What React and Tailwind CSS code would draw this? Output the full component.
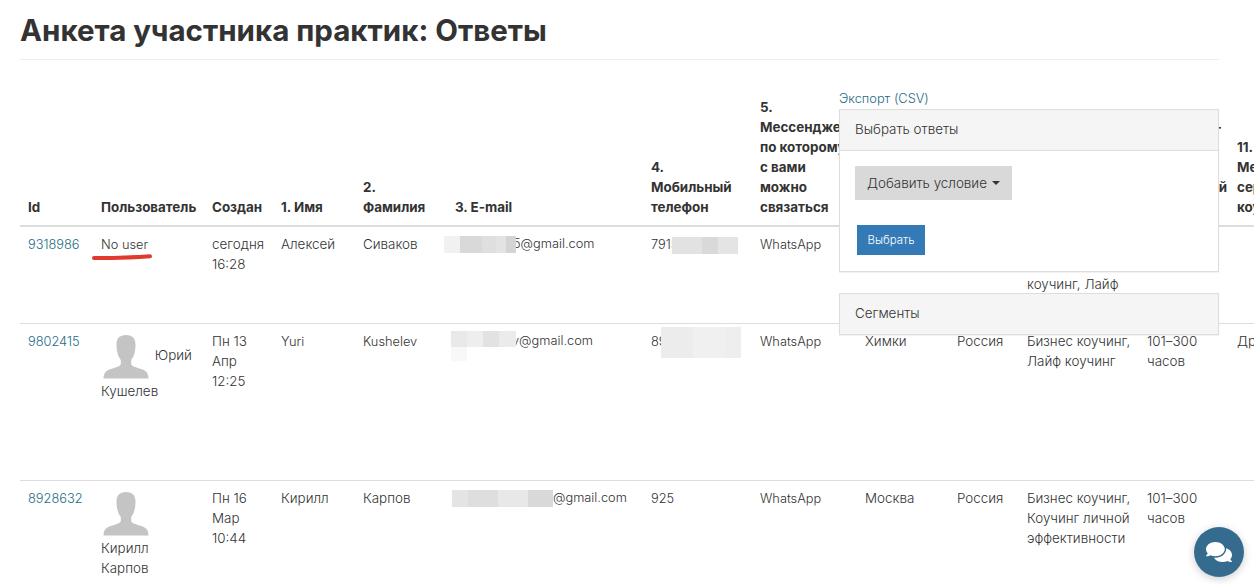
import React from 'react';
import { FaComments } from 'react-icons/fa';

const columns = [
  'w-[73px]', 'w-[111px]', 'w-[69px]', 'w-[82px]', 'w-[92px]', 'w-[196px]', 'w-[109px]',
  'w-[105px]', 'w-[92px]', 'w-[70px]', 'w-[120px]', 'w-[90px]', 'w-[200px]',
];

const headers = [
  ['Id'],
  ['Пользователь'],
  ['Создан'],
  ['1. Имя'],
  ['2.', 'Фамилия'],
  ['3. E-mail'],
  ['4.', 'Мобильный', 'телефон'],
  ['5.', 'Мессенджер,', 'по которому', 'с вами', 'можно', 'связаться'],
  ['6. Город'],
  ['7. Страна'],
  ['8. Направление', 'коучинга'],
  ['Ваш опыт -', 'часов', 'работы', 'тренерской', 'коучем'],
  ['11.', 'Место', 'сертификации', 'коуча'],
];

const Lines = ({ lines }) =>
  lines.map((line, i) => (
    <span key={i} className="block whitespace-nowrap">{line}</span>
  ));

// pixelated patches that cover personal data in the screenshot
const Patch = ({ className, parts }) => (
  <div className={`absolute flex ${className}`}>
    {parts.map((part, i) => (
      <div key={i} className={`h-full ${part}`}></div>
    ))}
  </div>
);

const Avatar = () => (
  <svg viewBox="0 0 50 50" className="inline-block w-[50px] h-[50px] align-middle">
    <path
      d="M25 4c-6.500 0-9.500 3.500-9.500 9.500 0 3 .4 7 1.400 10 .8 2.500 1.900 4 2.900 5.500v4c0 2.200-5.500 3.500-10 5-4.300 1.500-7 3-7.300 9.500h45c-.3-6.500-3-8-7.300-9.500-4.500-1.500-10-2.800-10-5v-4c1-1.500 2.100-3 2.900-5.500 1-3 1.400-7 1.400-10 0-6-3-9.500-9.500-9.500z"
      fill="#c4c4c4"
    />
  </svg>
);

const Td = ({ children, className = '' }) => (
  <td className={`relative p-2 align-top border-t border-[#ddd] ${className}`}>{children}</td>
);

const IdLink = ({ children }) => <a className="text-[12.8px] text-[#1f6b84]">{children}</a>;

const Latin = ({ children, className = '' }) => <span className={`text-[12.8px] ${className}`}>{children}</span>;

export default function App() {
  return (
    <div
      className="relative h-[584px] w-[1254px] overflow-hidden bg-white text-[13.4px] leading-5 text-[#333]"
      style={{ fontFamily: 'Inter, "Noto Sans", sans-serif' }}
    >
      <div className="pl-5 pr-[35px]">
        <h1 className="pt-[11px] pb-[10px] text-[29.500px] leading-[38px] font-bold border-b border-[#eee]">
          Анкета участника практик: Ответы
        </h1>
      </div>

      <table className="ml-5 mt-[29px] table-fixed border-collapse w-[1409px] font-light">
        <colgroup>
          {columns.map((c, i) => (
            <col key={i} className={c} />
          ))}
        </colgroup>
        <thead>
          <tr>
            {headers.map((h, i) => (
              <th key={i} className="p-2 text-left align-bottom font-bold border-b-2 border-[#ddd]">
                <Lines lines={h} />
              </th>
            ))}
          </tr>
        </thead>
        <tbody className="[&_td]:pt-[7px]">
          <tr className="h-[97px]">
            <Td><IdLink>9318986</IdLink></Td>
            <Td>
              <Latin>No user</Latin>
              <svg viewBox="0 0 60 6" className="absolute left-[-1px] top-[27px] w-[60px] h-[6px]">
                <path d="M2 4C20 4.300 40 3.500 58 2.300" stroke="#e0392e" strokeWidth="4" strokeLinecap="round" fill="none" />
              </svg>
            </Td>
            <Td><Lines lines={['сегодня', '16:28']} /></Td>
            <Td>Алексей</Td>
            <Td>Сиваков</Td>
            <Td>
              <Latin className="block pl-[58px]">5@gmail.com</Latin>
              <Patch
                className="left-[-3px] top-[9px] h-[17px]"
                parts={['w-[16px] bg-[#f1f1f1]', 'w-[22px] bg-[#d9d9d9]', 'w-[14px] bg-[#dfdfdf]', 'w-[10px] bg-[#e3e3e3]', 'w-[10px] bg-[#d4d4d4]']}
              />
            </Td>
            <Td>
              <Latin>7915</Latin>
              <Patch
                className="left-[29px] top-[10px] h-[17px]"
                parts={['w-[30px] bg-[#e2e2e2]', 'w-[16px] bg-[#d9d9d9]', 'w-[20px] bg-[#e4e4e4]']}
              />
            </Td>
            <Td><Latin>WhatsApp</Latin></Td>
            <Td></Td>
            <Td></Td>
            <Td><Lines lines={['Бизнес', 'и карьерный', 'коучинг, Лайф', 'коучинг']} /></Td>
            <Td></Td>
            <Td></Td>
          </tr>
          <tr className="h-[157px]">
            <Td><IdLink>9802415</IdLink></Td>
            <Td><Avatar /> Юрий Кушелев</Td>
            <Td>Пн 13 Апр 12:25</Td>
            <Td><Latin>Yuri</Latin></Td>
            <Td><Latin>Kushelev</Latin></Td>
            <Td>
              <Latin className="block pl-[57px]">v@gmail.com</Latin>
              <Patch
                className="left-[4px] top-[7px] h-[16px]"
                parts={['w-[16px] bg-[#e9e9e9]', 'w-[16px] bg-[#eeeeee]', 'w-[16px] bg-[#e2e2e2]', 'w-[17px] bg-[#ebebeb]']}
              />
              <Patch className="left-[4px] top-[23px] h-[14px]" parts={['w-[16px] bg-[#f8f8f8]']} />
            </Td>
            <Td>
              <Latin>89</Latin>
              <Patch
                className="left-[18px] top-[3px] h-[31px]"
                parts={['w-[32px] bg-[#ececec]', 'w-[32px] bg-[#f0f0f0]', 'w-[16px] bg-[#eeeeee]']}
              />
            </Td>
            <Td><Latin>WhatsApp</Latin></Td>
            <Td>Химки</Td>
            <Td>Россия</Td>
            <Td><Lines lines={['Бизнес коучинг,', 'Лайф коучинг']} /></Td>
            <Td><Lines lines={['101–300', 'часов']} /></Td>
            <Td>Другое</Td>
          </tr>
          <tr>
            <Td><IdLink>8928632</IdLink></Td>
            <Td><Avatar /> Кирилл Карпов</Td>
            <Td>Пн 16 Мар 10:44</Td>
            <Td>Кирилл</Td>
            <Td>Карпов</Td>
            <Td>
              <Latin className="block pl-[98px]">@gmail.com</Latin>
              <Patch
                className="left-[5px] top-[9px] h-[17px]"
                parts={['w-[16px] bg-[#e4e4e4]', 'w-[30px] bg-[#dedede]', 'w-[30px] bg-[#e8e8e8]', 'w-[25px] bg-[#d9d9d9]']}
              />
            </Td>
            <Td><Latin>925</Latin></Td>
            <Td><Latin>WhatsApp</Latin></Td>
            <Td>Москва</Td>
            <Td>Россия</Td>
            <Td><Lines lines={['Бизнес коучинг,', 'Коучинг личной', 'эффективности']} /></Td>
            <Td><Lines lines={['101–300', 'часов']} /></Td>
            <Td></Td>
          </tr>
        </tbody>
      </table>

      {/* filter panels sit over the table */}
      <div className="absolute left-[839px] top-[89px] w-[380px] font-light">
        <a className="block h-[20px] text-[12.8px] text-[#1f6b84]">Экспорт (CSV)</a>
        <div className="border border-[#ddd] bg-white shadow-[0_1px_1px_rgba(0,0,0,0.05)]">
          <div className="h-[41px] px-[15px] py-[9px] bg-[#f5f5f5] border-b border-[#ddd]">Выбрать ответы</div>
          <div className="px-[15px] pt-[15px] pb-[16px]">
            <button className="h-[34px] w-[157px] bg-[#d9d9d9] text-[#333] flex items-center justify-center gap-[5px]">
              Добавить условие
              <span className="border-x-[4px] border-x-transparent border-t-[4px] border-t-[#333]"></span>
            </button>
            <button className="block mt-[25px] ml-[2px] h-[30px] w-[68px] bg-[#337ab7] text-white text-[11.500px]">
              Выбрать
            </button>
          </div>
        </div>
        <div className="mt-[21px] h-[42px] px-[15px] py-[9px] bg-[#f5f5f5] border border-[#ddd] shadow-[0_1px_1px_rgba(0,0,0,0.05)]">
          Сегменты
        </div>
      </div>

      <button className="absolute left-[1194px] top-[527px] w-[50px] h-[50px] rounded-full bg-[#356b8e] flex items-center justify-center text-white shadow-[0_2px_8px_rgba(0,0,0,0.2)]">
        <FaComments className="w-[26px] h-[26px]" />
      </button>
    </div>
  );
}
